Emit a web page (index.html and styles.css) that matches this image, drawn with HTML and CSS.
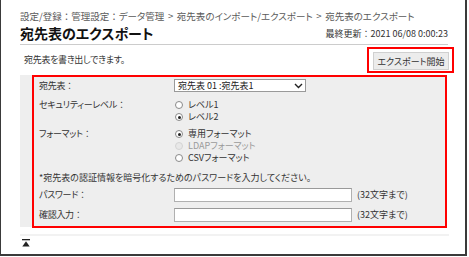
FILE: index.html
```html
<!DOCTYPE html>
<html lang="ja">
<head>
<meta charset="utf-8">
<link rel="stylesheet" href="styles.css">
</head>
<body>
<div class="frame">
  <div class="crumb">設定/登録<span class="colon">：</span>管理設定<span class="colon">：</span>データ管理 &gt; 宛先表のインポート/エクスポート &gt; 宛先表のエクスポート</div>
  <div class="titlerow">
    <h1 class="title">宛先表のエクスポート</h1>
    <div class="updated">最終更新<span class="colon">：</span>2021 06/08 0:00:23</div>
  </div>
  <div class="descrow">
    <div class="desc">宛先表を書き出しできます。</div>
    <div class="btnhl"><button class="btn">エクスポート開始</button></div>
  </div>
  <div class="panel">
    <div class="hl">
      <div class="row r-book">
        <div class="label">宛先表<span class="colon">：</span></div>
        <div class="value">
          <div class="select"><span>宛先表 01 :宛先表1</span>
            <svg class="chev" width="9" height="6" viewBox="0 0 9 6"><path d="M1 1 L4.5 4.5 L8 1" fill="none" stroke="#222" stroke-width="1.4"/></svg>
          </div>
        </div>
      </div>
      <div class="row r-sec">
        <div class="label lbl-top">セキュリティーレベル<span class="colon">：</span></div>
        <div class="value radios">
          <div class="radio"><span class="dot"></span>レベル1</div>
          <div class="radio"><span class="dot on"></span>レベル2</div>
        </div>
      </div>
      <div class="row r-fmt">
        <div class="label lbl-top">フォーマット<span class="colon">：</span></div>
        <div class="value radios">
          <div class="radio"><span class="dot on"></span>専用フォーマット</div>
          <div class="radio disabled"><span class="dot"></span>LDAPフォーマット</div>
          <div class="radio"><span class="dot"></span>CSVフォーマット</div>
        </div>
      </div>
      <div class="note">*宛先表の認証情報を暗号化するためのパスワードを入力してください。</div>
      <div class="row r-pw">
        <div class="label">パスワード<span class="colon">：</span></div>
        <div class="value inline"><span class="input"></span><span class="limit">(32文字まで)</span></div>
      </div>
      <div class="row r-cf">
        <div class="label">確認入力<span class="colon">：</span></div>
        <div class="value inline"><span class="input"></span><span class="limit">(32文字まで)</span></div>
      </div>
    </div>
  </div>
  <div class="sep"></div>
  <div class="totop">
    <svg width="8" height="8" viewBox="0 0 8 8"><rect x="0" y="0" width="8" height="1.3" fill="#222"/><path d="M0.3 7.5 L4 2.3 L7.7 7.5 Z" fill="#222"/></svg>
  </div>
</div>
</body>
</html>
```

FILE: styles.css
```css
* { box-sizing: border-box; }
html, body { margin: 0; padding: 0; background: #fff; }
body {
  font-family: "Noto Sans CJK JP", "Noto Sans", sans-serif;
  font-size: 9px;
  color: #333;
  font-feature-settings: "palt";
}
.colon { font-feature-settings: normal; }
.frame {
  width: 467px;
  height: 256px;
  border-left: 1px solid #3a3a3a;
  border-right: 2px solid #3a3a3a;
  border-bottom: 2px solid #3a3a3a;
  padding: 0 17px 0 19px;
  overflow: hidden;
}
.crumb {
  padding-top: 9px;
  height: 24px;
  line-height: 14px;
  color: #5a5a5a;
  font-size: 9.5px;
  word-spacing: 1.5px;
  white-space: nowrap;
}
.titlerow {
  display: flex;
  justify-content: space-between;
  align-items: center;
  height: 21px;
  border-bottom: 1px solid #ccc;
  padding-bottom: 2px;
}
.title {
  margin: 0;
  font-size: 14px;
  font-weight: bold;
  color: #111;
  line-height: 18px;
}
.updated {
  font-size: 9px;
  color: #333;
  line-height: 14px;
  margin-top: 2px;
}
.descrow {
  display: flex;
  justify-content: space-between;
  align-items: flex-start;
  height: 30px;
}
.desc {
  margin-top: 8px;
  margin-left: 4px;
  line-height: 14px;
  letter-spacing: -0.3px;
}
.btnhl {
  margin-top: 2px;
  margin-right: -6px;
  border: 2px solid #f00;
  padding: 3px 3px 1px 4px;
}
.btn {
  display: block;
  width: 76px;
  height: 18px;
  padding: 0;
  margin: 0;
  background: #ececec;
  border: 1px solid #d0d0d0;
  font-family: inherit;
  font-size: 9px;
  color: #333;
  font-feature-settings: "palt";
}
.panel {
  width: 427px;
  background: #eee;
  padding-left: 12px;
  height: 152px;
  overflow: visible;
}
.hl {
  border: 2px solid #f00;
  height: 153px;
  padding: 2px 0 0 5px;
}
.row {
  display: flex;
}
.label {
  width: 134px;
  flex: none;
  line-height: 12px;
  letter-spacing: -0.3px;
}
.r-book { height: 13px; align-items: center; }
.select {
  width: 132px;
  height: 13px;
  background: #fff;
  border: 1px solid #999;
  margin-left: 1px;
  display: flex;
  justify-content: space-between;
  align-items: center;
  padding: 0 2px 0 3px;
  line-height: 11px;
  color: #222;
}
.chev { flex: none; }
.r-sec { margin-top: 7px; }
.r-fmt { margin-top: 5px; }
.radios { display: flex; flex-direction: column; }
.radio {
  display: flex;
  align-items: center;
  height: 12px;
  line-height: 12px;
}
.dot {
  width: 8px;
  height: 8px;
  border: 1px solid #8a8a8a;
  border-radius: 50%;
  background: #fff;
  margin-left: 2px;
  margin-right: 5px;
  position: relative;
  flex: none;
}
.dot.on::after {
  content: "";
  position: absolute;
  left: 1.5px;
  top: 1.5px;
  width: 3px;
  height: 3px;
  border-radius: 50%;
  background: #222;
}
.radio.disabled { color: #9a9a9a; }
.radio.disabled .dot { border-color: #d4d4d4; background: #e8e8e8; }
.note {
  margin-top: 8px;
  line-height: 12px;
}
.r-pw { margin-top: 4px; align-items: center; }
.r-cf { margin-top: 6px; align-items: center; }
.inline { display: flex; align-items: center; }
.input {
  display: block;
  width: 178px;
  height: 14px;
  margin-left: 1px;
  background: #fff;
  border: 1px solid #b0b0b0;
  border-top-color: #999;
}
.limit {
  margin-left: 5px;
  line-height: 12px;
}
.sep {
  margin-top: 7px;
  width: 429px;
  height: 2px;
  background: #f2f2f2;
}
.totop {
  margin-top: 3px;
  margin-left: 2px;
  height: 8px;
  line-height: 0;
}
```
